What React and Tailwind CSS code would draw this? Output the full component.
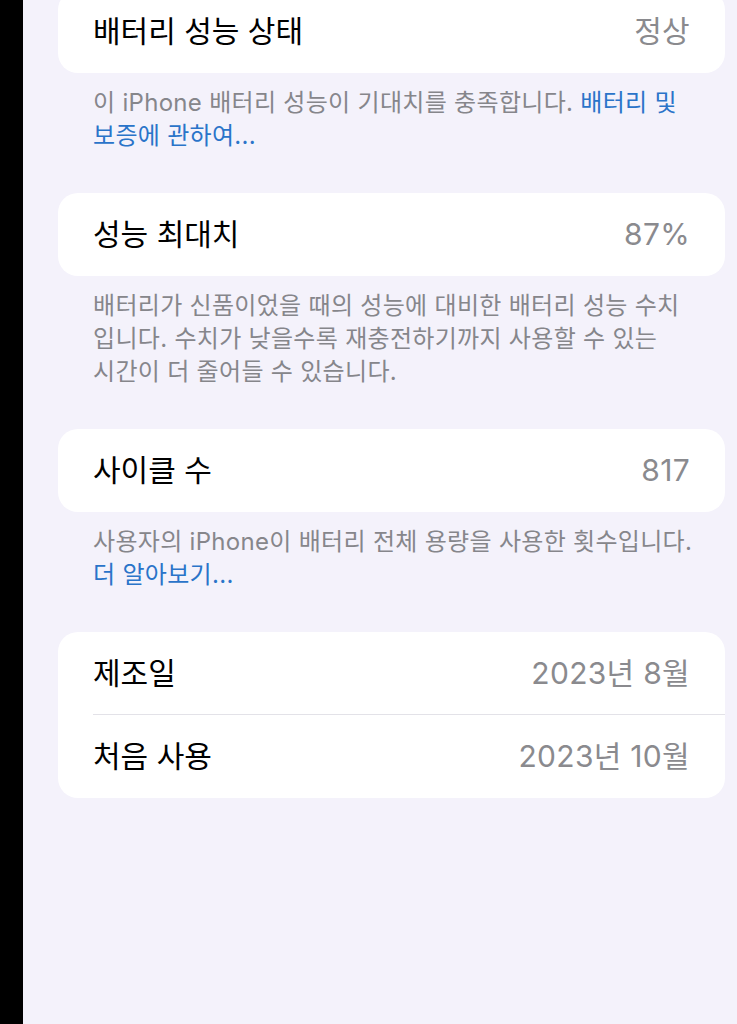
import React from 'react';

const font = { fontFamily: 'Inter, "Noto Sans CJK KR", sans-serif' };

const Row = ({ label, value, divider }) => (
  <div className="relative h-[83px] flex items-center justify-between pl-[35px] pr-[35px]">
    <span className="text-[30px] text-black">{label}</span>
    <span className="text-[30px] text-[#8a8a8e] tracking-[0.3px]">{value}</span>
    {divider && <div className="absolute left-[35px] right-0 bottom-0 h-px bg-[#e3e2e8]" />}
  </div>
);

const Footer = ({ lines }) => (
  <div className="pl-[35px] pt-[13px] pb-[41px] text-[24px] leading-[33px] tracking-[0.3px] text-[#86868b]">
    {lines.map((line, i) => (
      <div key={i} className="whitespace-nowrap">{line}</div>
    ))}
  </div>
);

const Link = ({ children }) => <span className="text-[#2a74c9]">{children}</span>;

export default function App() {
  return (
    <div className="min-h-screen flex bg-[#f4f2fb] overflow-hidden" style={font}>
      <div className="w-[23px] shrink-0 bg-black" />
      <div className="flex-1 pl-[35px] pr-[12px] -mt-[10px]">
        {/* battery health */}
        <div className="bg-white rounded-[20px]">
          <Row label="배터리 성능 상태" value="정상" />
        </div>
        <Footer
          lines={[
            <>이 iPhone 배터리 성능이 기대치를 충족합니다. <Link>배터리 및</Link></>,
            <Link>보증에 관하여...</Link>,
          ]}
        />

        {/* max capacity */}
        <div className="bg-white rounded-[20px]">
          <Row label="성능 최대치" value="87%" />
        </div>
        <Footer
          lines={[
            '배터리가 신품이었을 때의 성능에 대비한 배터리 성능 수치',
            '입니다. 수치가 낮을수록 재충전하기까지 사용할 수 있는',
            '시간이 더 줄어들 수 있습니다.',
          ]}
        />

        {/* cycle count */}
        <div className="bg-white rounded-[20px]">
          <Row label="사이클 수" value="817" />
        </div>
        <Footer
          lines={[
            '사용자의 iPhone이 배터리 전체 용량을 사용한 횟수입니다.',
            <Link>더 알아보기...</Link>,
          ]}
        />

        {/* dates */}
        <div className="bg-white rounded-[20px]">
          <Row label="제조일" value="2023년 8월" divider />
          <Row label="처음 사용" value="2023년 10월" />
        </div>
      </div>
    </div>
  );
}
